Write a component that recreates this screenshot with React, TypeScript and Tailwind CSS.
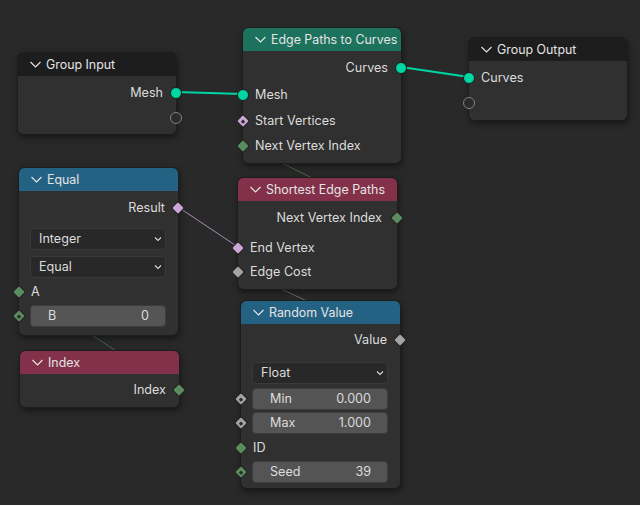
import type { ReactNode } from "react";

const Chevron = () => (
  <svg width="11" height="11" viewBox="0 0 11 11" fill="none" className="shrink-0">
    <path d="M0.5 3 L5.5 8 L10.5 3" stroke="#e6e6e6" strokeWidth="1.1" />
  </svg>
);

const SmallChevron = () => (
  <svg width="8" height="8" viewBox="0 0 8 8" fill="none" className="shrink-0">
    <path d="M1 2.5 L4 5.5 L7 2.5" stroke="#d8d8d8" strokeWidth="1.1" />
  </svg>
);

const Socket = ({ kind, side, dot }: { kind: string; side: "left" | "right"; dot?: boolean }) => {
  const pos = side === "left" ? "left-[-6px]" : "right-[-6px]";
  if (kind === "geo")
    return <span className={`absolute ${pos} top-1/2 -translate-y-1/2 w-[12px] h-[12px] rounded-full bg-[#00d6a3] border border-[#1c1c1c]`} />;
  if (kind === "empty")
    return <span className={`absolute ${pos} top-1/2 -translate-y-1/2 w-[12px] h-[12px] rounded-full bg-[#2b2b2b] border border-[#808080]`} />;
  const color = kind === "purple" ? "bg-[#cca6d6]" : kind === "green" ? "bg-[#5a8c5e]" : "bg-[#a3a3a3]";
  return (
    <span className={`absolute ${pos} top-1/2 -translate-y-1/2 w-[12px] h-[12px] flex items-center justify-center`}>
      <span className={`w-[8px] h-[8px] shrink-0 rotate-45 rounded-[1px] flex items-center justify-center ring-1 ring-[#222222] ${color}`}>
        {dot && <span className="w-[3px] h-[3px] bg-[#2a2a2a]" />}
      </span>
    </span>
  );
};

const Node = ({ title, head, pos, children }: { title: string; head: string; pos: string; children: ReactNode }) => (
  <div className={`absolute ${pos} rounded-[5px] bg-[#303030] shadow-[1px_3px_7px_rgba(0,0,0,0.55)] outline outline-1 outline-[#1d1d1d]`}>
    <div className={`h-[23px] flex items-center gap-[5px] pl-[12px] rounded-t-[5px] text-[12.4px] text-[#e4e4e4] ${head}`}>
      <Chevron />
      <span className="whitespace-nowrap pt-[2px]">{title}</span>
    </div>
    {children}
  </div>
);

const Row = ({ label, side, kind, dot, className }: { label?: string; side: "left" | "right"; kind: string; dot?: boolean; className?: string }) => (
  <div className={`relative h-[25px] flex items-center text-[12.6px] text-[#dcdcdc] whitespace-nowrap ${side === "right" ? "justify-end pr-[13px]" : "pl-[12px]"} ${className ?? ""}`}>
    <span className="pt-[2px]">{label}</span>
    <Socket kind={kind} side={side} dot={dot} />
  </div>
);

const Select = ({ label, className }: { label: string; className?: string }) => (
  <div className={`ml-[11px] mr-[12px] h-[22px] pl-[8px] pr-[3px] flex items-center justify-between rounded-[4px] bg-[#282828] border border-[#3a3a3a] text-[12.6px] text-[#dcdcdc] ${className ?? ""}`}>
    <span>{label}</span>
    <SmallChevron />
  </div>
);

const Field = ({ label, value, className, socket }: { label: string; value: string; className?: string; socket?: string }) => (
  <div className={`relative h-[22px] ${className ?? ""}`}>
    <div className="ml-[11px] mr-[12px] h-full pl-[17px] pr-[16px] flex items-center justify-between rounded-[4px] bg-[#545454] border border-[#3d3d3d] text-[12.6px] text-[#dcdcdc]">
      <span>{label}</span>
      <span>{value}</span>
    </div>
    {socket && <Socket kind={socket} side="left" dot />}
  </div>
);

const App = () => (
  <div className="relative w-[640px] h-[505px] overflow-hidden bg-[#292929] font-['Inter',sans-serif]">
    <svg width="640" height="505" className="absolute left-0 top-0">
      <line x1="176" y1="92" x2="243" y2="94" stroke="#00d6a3" strokeWidth="2" />
      <line x1="401" y1="67" x2="469" y2="77" stroke="#00d6a3" strokeWidth="2" />
      <line x1="178" y1="207" x2="238" y2="247" stroke="#a98ab2" strokeWidth="1" />
      <line x1="282" y1="163" x2="312" y2="178" stroke="#47694a" strokeWidth="1" />
      <line x1="281" y1="289" x2="307" y2="301" stroke="#6e6e6e" strokeWidth="1" />
      <line x1="92" y1="335" x2="116" y2="351" stroke="#47694a" strokeWidth="1" />
    </svg>

    <Node title="Group Input" head="bg-[#1d1d1d]" pos="left-[18px] top-[53px] w-[158px] h-[81px]">
      <Row label="Mesh" side="right" kind="geo" className="mt-[4px]" />
      <Row side="right" kind="empty" />
    </Node>

    <Node title="Edge Paths to Curves" head="bg-[#1d725e]" pos="left-[243px] top-[28px] w-[158px] h-[135px]">
      <Row label="Curves" side="right" kind="geo" className="mt-[4px]" />
      <Row label="Mesh" side="left" kind="geo" className="mt-[2px]" />
      <Row label="Start Vertices" side="left" kind="purple" dot className="mt-[1px]" />
      <Row label="Next Vertex Index" side="left" kind="green" />
    </Node>

    <Node title="Group Output" head="bg-[#1d1d1d]" pos="left-[469px] top-[38px] w-[158px] h-[82px]">
      <Row label="Curves" side="left" kind="geo" className="mt-[4px]" />
      <Row side="left" kind="empty" />
    </Node>

    <Node title="Equal" head="bg-[#246283]" pos="left-[19px] top-[168px] w-[159px] h-[167px]">
      <Row label="Result" side="right" kind="purple" className="mt-[4px]" />
      <Select label="Integer" className="mt-[8px]" />
      <Select label="Equal" className="mt-[6px]" />
      <Row label="A" side="left" kind="green" className="mt-[1px]" />
      <Field label="B" value="0" socket="green" className="mt-[1px]" />
    </Node>

    <Node title="Index" head="bg-[#83314a]" pos="left-[20px] top-[351px] w-[159px] h-[56px]">
      <Row label="Index" side="right" kind="green" className="mt-[3px]" />
    </Node>

    <Node title="Shortest Edge Paths" head="bg-[#83314a]" pos="left-[238px] top-[178px] w-[159px] h-[111px]">
      <Row label="Next Vertex Index" side="right" kind="green" className="mt-[4px] pr-[15px]" />
      <Row label="End Vertex" side="left" kind="purple" className="mt-[5px]" />
      <Row label="Edge Cost" side="left" kind="gray" className="mt-[-1px]" />
    </Node>

    <Node title="Random Value" head="bg-[#246283]" pos="left-[241px] top-[301px] w-[159px] h-[187px]">
      <Row label="Value" side="right" kind="gray" className="mt-[3px]" />
      <Select label="Float" className="mt-[10px]" />
      <Field label="Min" value="0.000" socket="gray" className="mt-[4px]" />
      <Field label="Max" value="1.000" socket="gray" className="mt-[2px]" />
      <Row label="ID" side="left" kind="green" className="mt-[1px]" />
      <Field label="Seed" value="39" socket="green" className="mt-[1px]" />
    </Node>
  </div>
);

export default App;
